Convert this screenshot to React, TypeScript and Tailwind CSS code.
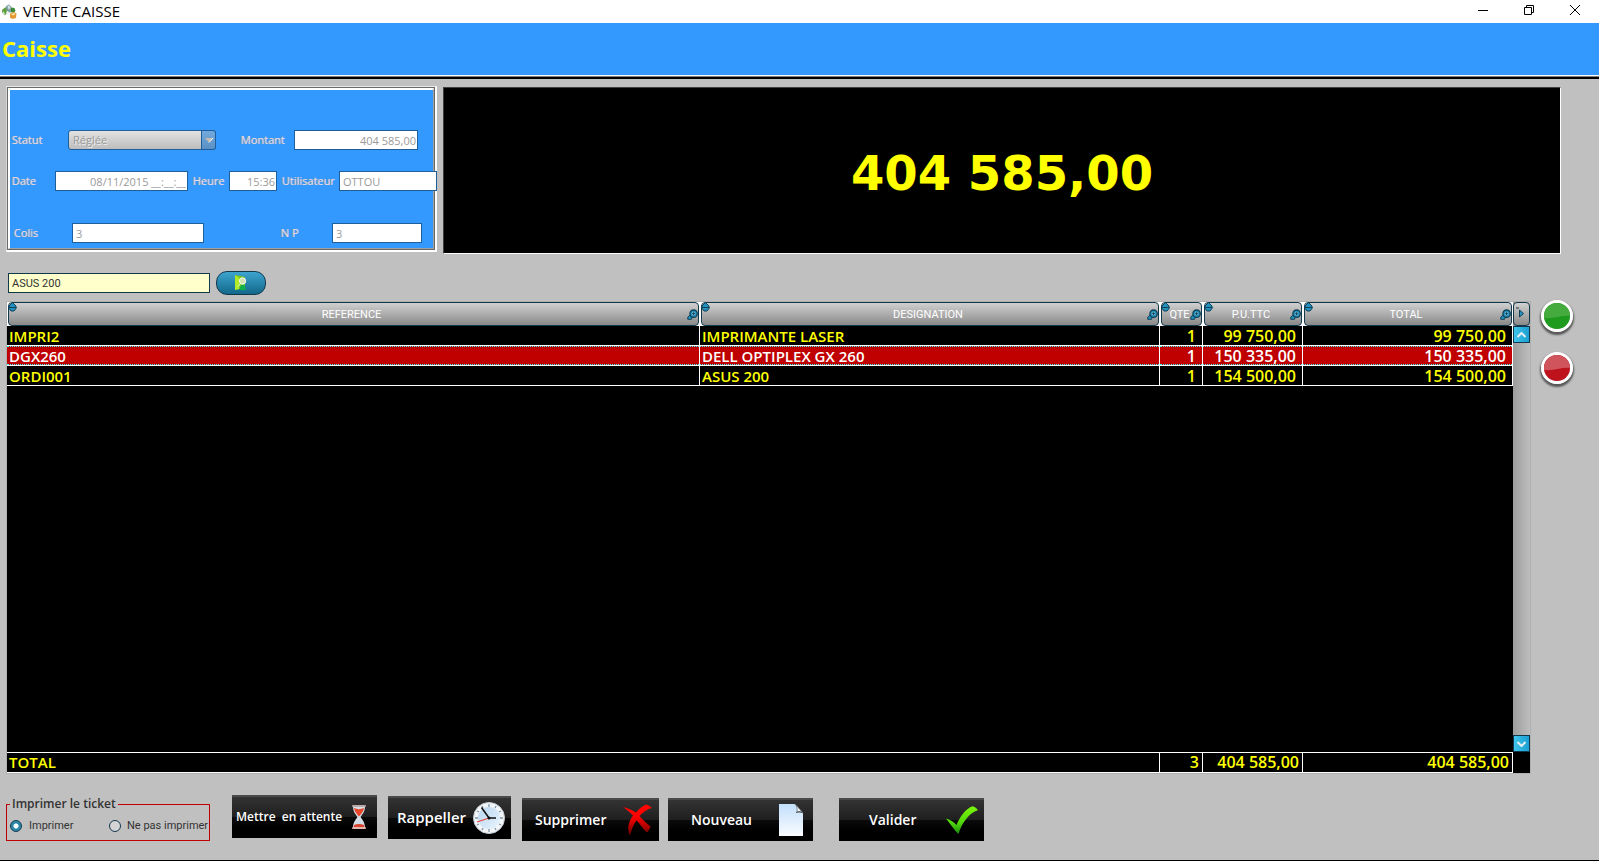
import React from "react";

const columns = [
  { name: "REFERENCE", width: "" },
  { name: "DESIGNATION", width: "w-[460px]" },
  { name: "QTE", width: "w-[43px]" },
  { name: "P.U.TTC", width: "w-[100px]" },
  { name: "TOTAL", width: "w-[210px]" },
];

const lines = [
  { ref: "IMPRI2", name: "IMPRIMANTE LASER", qty: "1", price: "99 750,00", total: "99 750,00", selected: false },
  { ref: "DGX260", name: "DELL OPTIPLEX GX 260", qty: "1", price: "150 335,00", total: "150 335,00", selected: true },
  { ref: "ORDI001", name: "ASUS 200", qty: "1", price: "154 500,00", total: "154 500,00", selected: false },
];

const labelStyle =
  "shrink-0 text-[11px] leading-5 font-medium whitespace-nowrap text-[#e8dde2] [text-shadow:-1px_0_0_#a3a3ac]";
const fieldStyle =
  "h-5 shrink-0 border border-[#1c5f9c] bg-white px-[3px] text-[11px] leading-4 text-[#9a9a9a] outline-none";
const darkButton =
  "flex h-[43px] shrink-0 items-center border-t-2 border-[#4a4a4a] bg-[linear-gradient(180deg,#333_0%,#1f1f1f_48%,#0a0a0a_50%,#000_75%)] pb-[2px] font-semibold text-white";

function AppIcon() {
  return (
    <svg width="15" height="15" viewBox="0 0 15 15" aria-hidden="true">
      <path d="M0 6 3 3.500 5 3 5 9 3 11.500 0 8.500Z" fill="#5f9e3c" />
      <path d="M0 8 2 7.500 3.500 11 1 10Z" fill="#c9d9b8" />
      <path d="M4 2 7 .5 9.500 3 9.500 8 6 9 4.500 6Z" fill="#7f9da6" />
      <path d="M5.500 2 7.500 1.500 8.500 4 6.500 5.500Z" fill="#d3e2e6" />
      <path d="M9 3.500 12.500 4 13.500 7 11 9 9 8Z" fill="#3f8a34" />
      <path d="M4 8 6 7 7.500 9.500 5.500 11Z" fill="#f0f2ee" />
      <path d="M8 9.500 12 8 14.500 9.500 14 14 10 15 8 13.500Z" fill="#e39a35" />
      <path d="M9 10 12 9 13.500 10 11 11.500Z" fill="#fbe3a8" />
    </svg>
  );
}

function SortIcon() {
  return (
    <svg className="absolute -top-px -left-px" width="9" height="10" viewBox="0 0 9 10" aria-hidden="true">
      <path d="M4.500.5 8 4V6.500L6 9H3L1 6.500V4Z" fill="#2390bd" stroke="#0f4258" />
      <path d="M.5 5.500h8" stroke="#0f4258" />
    </svg>
  );
}

function SearchGlyph() {
  return (
    <svg className="absolute right-0 bottom-[5px]" width="11" height="11" viewBox="0 0 11 11" aria-hidden="true">
      <path d="M.8 10.300V8L3 6.200 5.200 8.200 4.500 10.300Z" fill="#2390bd" stroke="#0f4258" />
      <circle cx="6.600" cy="4.700" r="3.700" fill="#2390bd" stroke="#0f4258" strokeWidth="1.300" />
      <circle cx="6.600" cy="4.700" r="1.800" fill="#8cc6dc" />
      <path d="M6.600 3.200v3M5.100 4.700h3" stroke="#0f4258" />
    </svg>
  );
}

function LookupIcon() {
  return (
    <svg width="12" height="16" viewBox="0 0 12 16" aria-hidden="true">
      <path d="M0 0 10 2V13L0 15Z" fill="#7cc81c" />
      <path d="M0 0 4 3V14L0 15Z" fill="#b2ea28" />
      <path d="M5 15c-.5-3.500.5-5 2.500-5.500 2.500.5 3.500 2 3 5.500Z" fill="#0fb34a" />
      <circle cx="7.500" cy="6" r="3.200" fill="#cfe6b4" stroke="#f4fae8" />
      <path d="M5.500 8.500 3 11.500" stroke="#f4fae8" />
    </svg>
  );
}

function Hourglass() {
  return (
    <svg width="16" height="26" viewBox="0 0 16 26" aria-hidden="true">
      <path d="M2 2h12c0 6-2.500 8-4.500 11 2 3 4.500 5 4.500 11H2c0-6 2.500-8 4.500-11C4.500 10 2 8 2 2Z" fill="#d7dfe6" />
      <path d="M3 4c3 1.500 7 1.500 10 0-.5 4-3 6-5 8.500C6 10 3.500 8 3 4Z" fill="#e8472b" />
      <path d="M8 16c2 2 4.500 4 5 7H3c.5-3 3-5 5-7Z" fill="#cfdce8" />
      <path d="M3 21c3-1.500 7-1.500 10 0l.3 3H2.700Z" fill="#d9432c" />
      <rect x="1" y="1" width="14" height="2" rx="1" fill="#b9aaa8" />
      <rect x="1" y="23" width="14" height="2" rx="1" fill="#e0b5af" />
    </svg>
  );
}

function Clock() {
  return (
    <svg width="32" height="32" viewBox="0 0 32 32" aria-hidden="true">
      <defs>
        <linearGradient id="clockFace" x1="0" y1="0" x2="1" y2="1">
          <stop offset="0" stopColor="#b7d6f2" />
          <stop offset="1" stopColor="#e9f4fd" />
        </linearGradient>
      </defs>
      <circle cx="16" cy="16" r="15.500" fill="#f2f6f9" stroke="#c4ccd2" />
      <circle cx="16" cy="16" r="11" fill="url(#clockFace)" />
      <g stroke="#8294a2" strokeWidth="1.300">
        <path d="M16 2v3M16 27v3M2 16h3M27 16h3M9 4l1 2M23 4l-1 2M4 9l2 1M28 9l-2 1M4 23l2-1M28 23l-2-1M9 28l1-2M23 28l-1-2" />
      </g>
      <path d="M4 20 16 16" stroke="#e8403a" strokeWidth="1.300" />
      <path d="M8.500 5.500 16 16h7" fill="none" stroke="#111" strokeWidth="1.600" />
      <circle cx="16" cy="16" r="1.500" fill="#111" />
    </svg>
  );
}

function Cross() {
  return (
    <svg width="29" height="32" viewBox="0 0 29 32" aria-hidden="true">
      <defs>
        <linearGradient id="crossRed" x1="0" y1="0" x2="0" y2="1">
          <stop offset="0" stopColor="#ff0505" />
          <stop offset=".4" stopColor="#f00" />
          <stop offset="1" stopColor="#600" />
        </linearGradient>
      </defs>
      <path
        d="M0 3C5 4 9 6 13 8.500 16 5 19 2 23 .5 25 1 27 2 29 4 24.500 5 20 8 16.500 12 20 16 24 20 27.500 22.500 27 25 25 27 24 28.500 20 25 17 20 13.500 16.500 10 21 8.500 26 7 31.500 5 28 5 24 5.500 21 6.500 17 8 14 10 11.500 7 8.500 3.500 5.500 0 3Z"
        fill="url(#crossRed)"
      />
    </svg>
  );
}

function Page() {
  return (
    <svg width="24" height="32" viewBox="0 0 24 32" aria-hidden="true">
      <defs>
        <linearGradient id="pageBlue" x1="0" y1="0" x2="0" y2="1">
          <stop offset="0" stopColor="#c2dffc" />
          <stop offset="1" stopColor="#fafcff" />
        </linearGradient>
      </defs>
      <path d="M0 0h16l8 9v23H0Z" fill="url(#pageBlue)" />
      <path d="M16 0l8 9c-2-1.500-4-1.500-6-1 .5-3 0-6-2-8Z" fill="#f6f8fa" stroke="#60686f" strokeWidth=".7" />
      <path d="M17 8.500c2-.8 4-.8 6 0" fill="none" stroke="#444" />
    </svg>
  );
}

function Check() {
  return (
    <svg width="32" height="28" viewBox="0 0 32 28" aria-hidden="true">
      <defs>
        <linearGradient id="checkGreen" x1="0" y1="0" x2="0" y2="1">
          <stop offset="0" stopColor="#7cf80a" />
          <stop offset=".6" stopColor="#52d60c" />
          <stop offset="1" stopColor="#178a08" />
        </linearGradient>
      </defs>
      <path
        d="M0 12.500C4 13.500 7.500 16 10.500 19 14 10 20 2.500 26.500.2 28.500.8 30.500 2 32 4 23.500 7 16 16 12.500 28 8 24 4.500 18 0 12.500Z"
        fill="url(#checkGreen)"
      />
    </svg>
  );
}

function RoundButton({ label, tone }: { label: string; tone: "green" | "red" }) {
  return (
    <button
      aria-label={label}
      className="h-8 w-8 overflow-hidden rounded-full border-[3px] border-white shadow-[0_2px_2px_1px_rgba(0,0,0,0.55)]"
    >
      <svg width="26" height="26" viewBox="0 0 26 26" aria-hidden="true">
        <rect width="26" height="26" fill={tone === "green" ? "#1e9a1e" : "#be121d"} />
        <path
          d="M0 0h26v13C18 12 10 16 0 15Z"
          fill={tone === "green" ? "#45ab3f" : "#d0545c"}
        />
      </svg>
    </button>
  );
}

export default function App() {
  return (
    <div className="flex min-h-screen flex-col border-b border-black bg-[#c0c0c0] font-['Open_Sans','Noto_Sans',sans-serif] text-[#333]">
      <header className="flex h-[23px] items-start bg-white pt-px pr-px pl-[2px]">
        <div className="flex h-5 flex-1 items-center gap-[6px]">
          <AppIcon />
          <h1 className="text-[15px] leading-5 text-black">VENTE CAISSE</h1>
        </div>
        <div className="-mt-px flex items-start">
          <button aria-label="Réduire" className="flex h-5 w-[46px] items-center justify-center">
            <svg width="10" height="10" viewBox="0 0 10 10"><path d="M0 5.500h10" stroke="#000" /></svg>
          </button>
          <button aria-label="Restaurer" className="flex h-5 w-[46px] items-center justify-center">
            <svg width="10" height="10" viewBox="0 0 10 10" fill="none" stroke="#000">
              <path d="M.5 2.500h7v7h-7zM2.500 2.500v-2h7v7h-2" />
            </svg>
          </button>
          <button aria-label="Fermer" className="flex h-5 w-[46px] items-center justify-center">
            <svg width="10" height="10" viewBox="0 0 10 10"><path d="M0 0l10 10M10 0 0 10" stroke="#000" /></svg>
          </button>
        </div>
      </header>

      <div className="flex h-[52px] items-center bg-[#3399ff] pb-[2px] pl-[2px]">
        <h2 className="text-[22px] leading-7 font-bold text-[#ffff00]">Caisse</h2>
      </div>
      <div className="h-1 border-t border-b-2 border-t-white border-b-black bg-[#808080]" />

      <div className="flex gap-[6px] pt-[7px] pr-[38px] pl-[6px]">
        <section className="w-[431px] shrink-0 border-t border-r-2 border-b-2 border-l border-t-[#e8e8e8] border-r-white border-b-white border-l-[#d8d8d8]">
          <div className="border border-[#696969]">
            <div className="h-[161px] border-t-2 border-r border-b border-l-2 border-t-white border-r-[#a0a0a0] border-b-[#a0a0a0] border-l-white bg-[#3399ff] pt-10">
              <div className="flex pl-[2px]">
                <label htmlFor="statut" className={`w-14 ${labelStyle}`}>Statut</label>
                <div className="relative">
                  <select
                    id="statut"
                    disabled
                    className="block h-5 w-[148px] appearance-none rounded-[3px] border border-[#1c5f9c] bg-[linear-gradient(180deg,#e2e2e2,#bdbdbd)] px-1 text-[11px] leading-4 text-[#9a9a9a] opacity-100 [text-shadow:1px_1px_0_#eee]"
                  >
                    <option>Réglée</option>
                  </select>
                  <span className="pointer-events-none absolute top-0 right-0 flex h-5 w-[15px] items-center justify-center rounded-r-[3px] border border-[#1c5f9c] bg-[linear-gradient(180deg,#73a9dd,#5b90c4)]">
                    <svg width="8" height="5" viewBox="0 0 8 5"><path d="M0 0h8L4 4.500Z" fill="#c5b9ae" /><path d="M4 4.500 8 0" stroke="#fff" /></svg>
                  </span>
                </div>
                <label htmlFor="montant" className={`ml-[25px] w-[53px] ${labelStyle}`}>Montant</label>
                <input id="montant" readOnly value="404 585,00" className={`w-[124px] text-right !pr-px ${fieldStyle}`} />
              </div>
              <div className="mt-[21px] flex pl-[2px]">
                <label htmlFor="date" className={`w-[43px] ${labelStyle}`}>Date</label>
                <input id="date" readOnly value="08/11/2015 __:__:__" className={`w-[133px] text-right !pr-px ${fieldStyle}`} />
                <label htmlFor="heure" className={`ml-[5px] w-9 ${labelStyle}`}>Heure</label>
                <input id="heure" readOnly value="15:36" className={`w-12 text-right !pr-px ${fieldStyle}`} />
                <label htmlFor="utilisateur" className={`ml-[5px] w-[57px] ${labelStyle}`}>Utilisateur</label>
                <input id="utilisateur" readOnly value="OTTOU" className={`w-[98px] ${fieldStyle}`} />
              </div>
              <div className="mt-8 flex pl-1">
                <label htmlFor="colis" className={`w-[58px] ${labelStyle}`}>Colis</label>
                <input id="colis" readOnly value="3" className={`w-[132px] ${fieldStyle}`} />
                <label htmlFor="np" className={`ml-[77px] w-[51px] ${labelStyle}`}>N P</label>
                <input id="np" readOnly value="3" className={`w-[90px] ${fieldStyle}`} />
              </div>
            </div>
          </div>
        </section>

        <output className="mt-px -mb-[2px] flex flex-1 items-center justify-center border border-t-[#404040] border-r-white border-b-white border-l-[#404040] bg-black pt-1 font-['DejaVu_Sans',sans-serif] text-[48px] font-bold text-[#ffff00]">
          404 585,00
        </output>
      </div>

      <form className="flex items-center gap-[6px] pt-[19px] pl-2" onSubmit={(e) => e.preventDefault()}>
        <input
          aria-label="Article"
          defaultValue="ASUS 200"
          className="h-5 w-[202px] border border-[#12384c] bg-[#ffffcc] px-[3px] font-['Roboto',sans-serif] text-[11px] leading-4 text-[#333] outline-none"
        />
        <button
          aria-label="Rechercher l'article"
          className="flex h-6 w-[50px] items-center justify-center rounded-[11px] border border-[#12384c] bg-[linear-gradient(180deg,#3da5cf,#12688a)]"
        >
          <LookupIcon />
        </button>
      </form>

      <div className="mt-[6px] flex flex-1 pl-[6px]">
        <div className="flex flex-1 border border-[#b0b0b0] bg-black">
          <table className="flex-1 table-fixed border-separate border-spacing-0 text-[15px] leading-5 font-semibold text-[#ffff00]">
            <colgroup>
              {columns.map((c) => (
                <col key={c.name} className={c.width} />
              ))}
            </colgroup>
            <thead>
              <tr className="h-6">
                {columns.map((c) => (
                  <th key={c.name} scope="col" className="h-6 bg-white p-0 px-px">
                    <div className="relative h-6 rounded-[4px] border border-[#12384c] bg-[linear-gradient(180deg,#d0d0d0,#8a8a8a)] pr-1 text-center font-['Roboto',sans-serif] text-[11px] leading-6 font-normal text-white">
                      <SortIcon />
                      <span>{c.name}</span>
                      <SearchGlyph />
                    </div>
                  </th>
                ))}
              </tr>
            </thead>
            <tbody>
              {lines.map((l) => (
                <tr
                  key={l.ref}
                  className={
                    l.selected
                      ? "h-5 bg-[#c00000] text-white *:border-r *:border-b *:border-white"
                      : "h-5 *:border-r *:border-b *:border-white"
                  }
                >
                  {[l.ref, l.name, l.qty, l.price, l.total].map((v, i) => (
                    <td key={i} className="h-5 p-0">
                      <div
                        className={`h-[19px] whitespace-nowrap ${i < 2 ? "pl-[2px]" : "pr-[6px] text-right text-[16px]"} ${l.selected ? "border-y border-dotted border-[#3ff] leading-[19px]" : "leading-[21px]"}`}
                      >
                        {v}
                      </div>
                    </td>
                  ))}
                </tr>
              ))}
              <tr>
                <td colSpan={5} className="p-0" />
              </tr>
            </tbody>
            <tfoot>
              <tr className="h-[21px] *:h-[21px] *:border-y *:border-r *:border-white *:p-0">
                <th scope="row" colSpan={2} className="text-left leading-[19px] font-semibold">
                  <span className="pl-[2px]">TOTAL</span>
                </th>
                <td className="text-right text-[16px] leading-[19px]"><span className="pr-[3px]">3</span></td>
                <td className="text-right text-[16px] leading-[19px]"><span className="pr-[3px]">404 585,00</span></td>
                <td className="text-right text-[16px] leading-[19px]"><span className="pr-[3px]">404 585,00</span></td>
              </tr>
            </tfoot>
          </table>
          <div className="flex w-[17px] flex-col bg-[linear-gradient(90deg,#9c9c9c,#bebebe)]">
            <button aria-label="Colonnes suivantes" className="relative h-6 rounded-[4px] border border-[#12384c] bg-[linear-gradient(180deg,#d0d0d0,#8a8a8a)]">
              <svg width="15" height="22" viewBox="0 0 15 22"><path d="M2 5h3" stroke="#12384c" /><path d="M5.500 7 9.500 10.500 5.500 14Z" fill="#2390bd" stroke="#0f4258" /></svg>
            </button>
            <button aria-label="Défiler vers le haut" className="flex h-[17px] items-center justify-center border border-[#12384c] bg-[linear-gradient(90deg,#3fc4ec,#1b9fd2)]">
              <svg width="9" height="6" viewBox="0 0 9 6"><path d="M.5 5 4.500 1 8.500 5" fill="none" stroke="#e8eef2" strokeWidth="2" /></svg>
            </button>
            <div className="flex-1" />
            <button aria-label="Défiler vers le bas" className="flex h-[17px] items-center justify-center border border-[#12384c] bg-[linear-gradient(90deg,#3fc4ec,#1b9fd2)]">
              <svg width="9" height="6" viewBox="0 0 9 6"><path d="M.5 1 4.500 5 8.500 1" fill="none" stroke="#e8eef2" strokeWidth="2" /></svg>
            </button>
            <div className="h-[21px] bg-black" />
          </div>
        </div>
        <div className="-mt-px flex w-[68px] flex-col items-center gap-5 pr-[16px]">
          <RoundButton label="Ajouter" tone="green" />
          <RoundButton label="Retirer" tone="red" />
        </div>
      </div>

      <footer className="flex h-[86px] items-start pt-[21px] pl-[6px]">
        <fieldset className="mt-px h-[45px] w-[204px] min-w-0 shrink-0 border border-[#c00000] pl-[3px]">
          <legend className="px-[2px] text-[12px] leading-4 font-semibold whitespace-nowrap">Imprimer le ticket</legend>
          <div className="flex items-center pt-[6px] font-['Roboto',sans-serif] text-[11px] leading-4 whitespace-nowrap">
            <label className="flex w-[99px] shrink-0 items-center gap-[7px]">
              <input type="radio" name="ticket" defaultChecked className="h-3 w-3 appearance-none rounded-full border border-[#12384c] bg-white checked:border-[#12384c] checked:bg-[radial-gradient(circle,#fff_0_2px,#2b86a8_3px)]" />
              Imprimer
            </label>
            <label className="flex items-center gap-[6px]">
              <input type="radio" name="ticket" className="h-3 w-3 appearance-none rounded-full border border-[#12384c] bg-[#d4d4d4]" />
              Ne pas imprimer
            </label>
          </div>
        </fieldset>
        <button className={`ml-[22px] w-[145px] justify-between pr-[10px] pl-1 text-[12px] whitespace-pre ${darkButton}`}>
          {"Mettre  en attente"}
          <Hourglass />
        </button>
        <button className={`mt-px ml-[11px] w-[123px] justify-between pr-[6px] pl-[9px] text-[15px] ${darkButton}`}>
          Rappeller
          <Clock />
        </button>
        <button className={`mt-[3px] ml-[11px] w-[137px] justify-between pr-[7px] pl-[13px] text-[14px] ${darkButton}`}>
          Supprimer
          <Cross />
        </button>
        <button className={`mt-[3px] ml-[9px] w-[145px] justify-between pr-[10px] pl-[23px] text-[14px] ${darkButton}`}>
          Nouveau
          <Page />
        </button>
        <button className={`mt-[3px] ml-[26px] w-[145px] justify-between pr-[6px] pl-[30px] text-[14px] ${darkButton}`}>
          Valider
          <Check />
        </button>
      </footer>
    </div>
  );
}
